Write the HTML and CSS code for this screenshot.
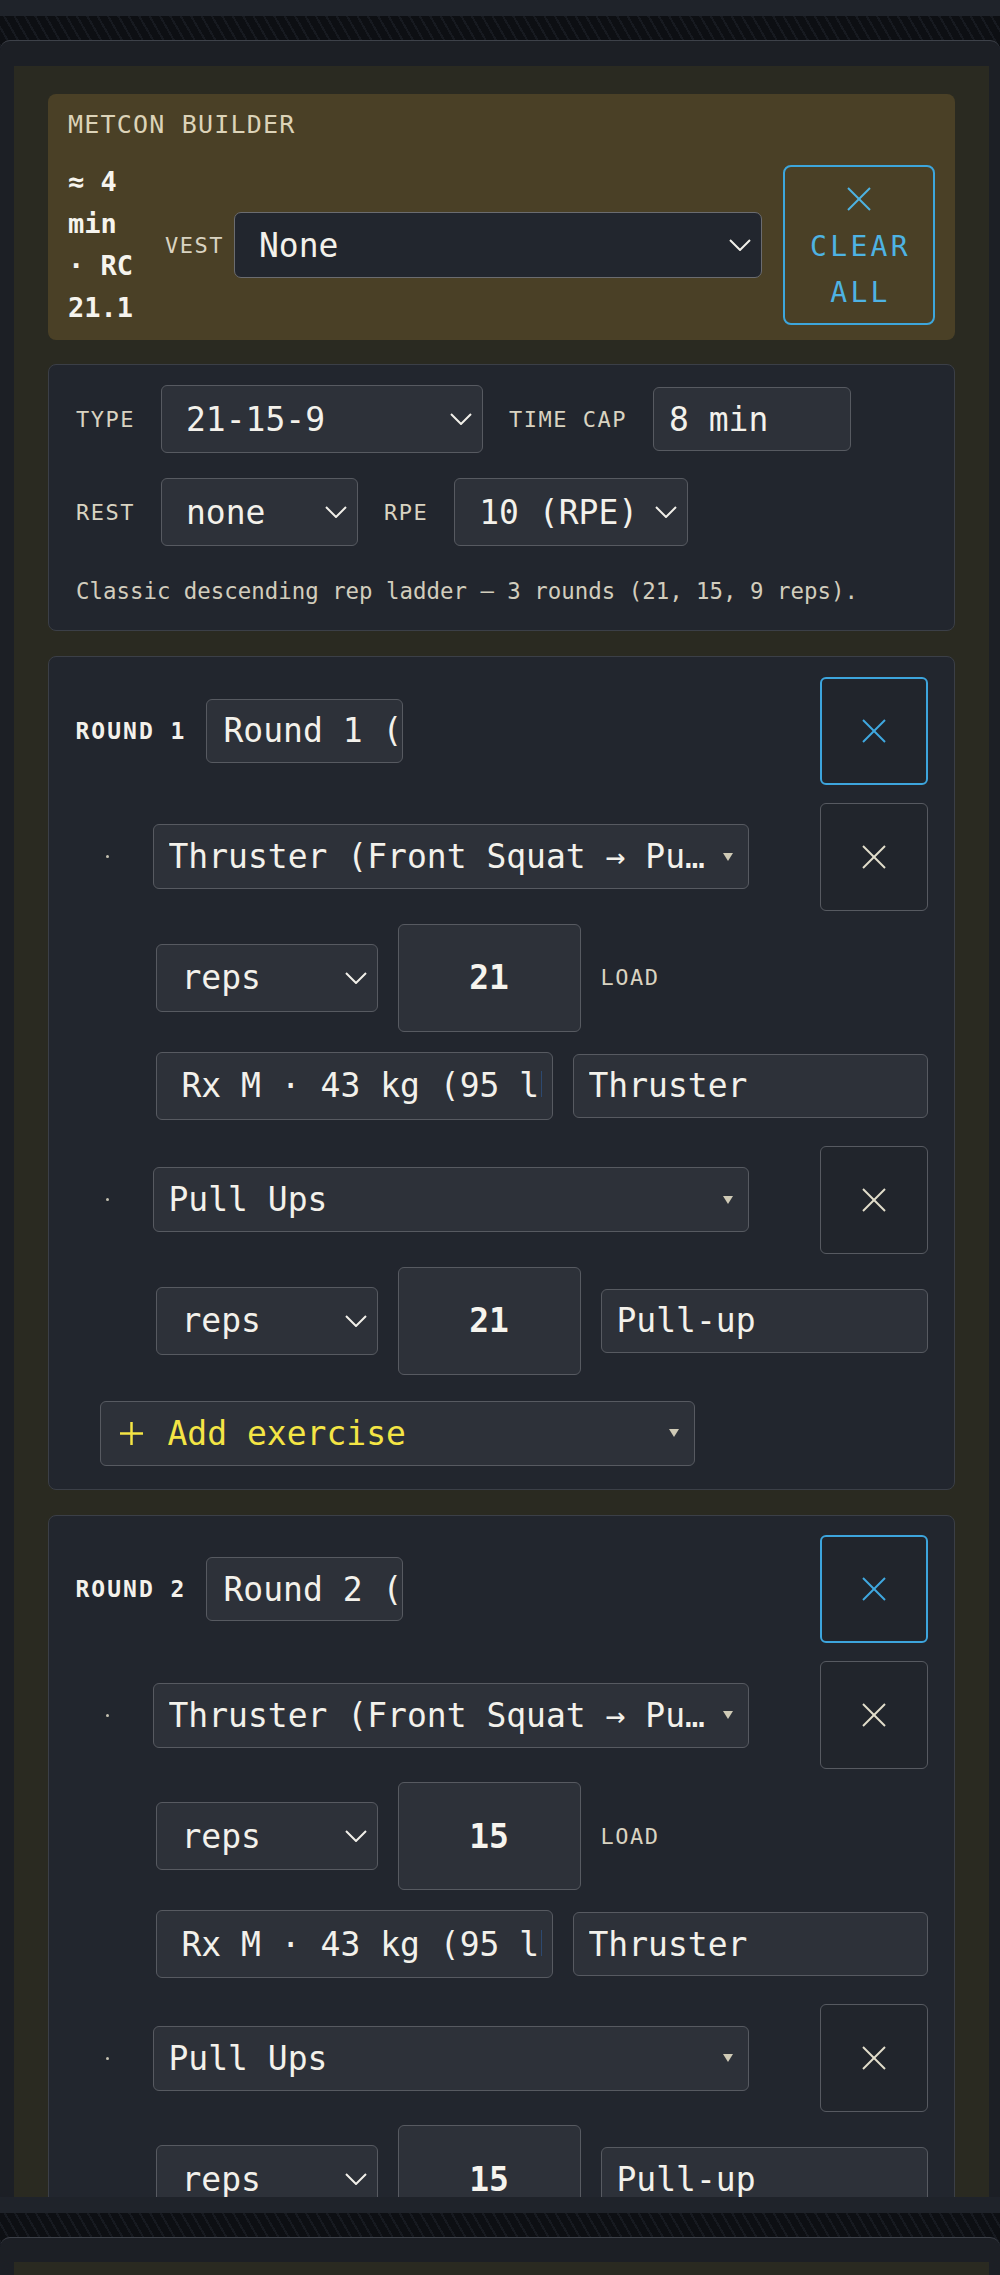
FILE: index.html
```html
<!DOCTYPE html>
<html lang="en">
<head>
<meta charset="utf-8">
<title>Metcon Builder</title>
<link rel="stylesheet" href="styles.css">
</head>
<body>
<div class="prev-end"></div>
<div class="panel">
  <div class="builder">
    <section class="hero">
      <div class="hero-title">METCON BUILDER</div>
      <div class="hero-row">
        <div class="stats">≈ 4 min · RC 21.1</div>
        <span class="label vest-label">VEST</span>
        <div class="ctl vest-select"><span class="txt">None</span><svg class="chev" viewBox="0 0 22 12" width="22" height="12"><polyline points="1,1 11,11 21,1"/></svg></div>
        <button class="clear-btn"><svg class="x-ico" viewBox="0 0 24 24" width="24" height="24"><line x1="1" y1="1" x2="23" y2="23"/><line x1="23" y1="1" x2="1" y2="23"/></svg><span class="clear-txt">CLEAR ALL</span></button>
      </div>
    </section>

    <section class="card config">
      <div class="cfg-row">
        <span class="label">TYPE</span>
        <div class="ctl sel w-type"><span class="txt">21-15-9</span><svg class="chev" viewBox="0 0 22 12" width="22" height="12"><polyline points="1,1 11,11 21,1"/></svg></div>
        <span class="label">TIME CAP</span>
        <div class="ctl inp w-cap"><span class="txt">8 min</span></div>
      </div>
      <div class="cfg-row row2">
        <span class="label">REST</span>
        <div class="ctl sel w-rest"><span class="txt">none</span><svg class="chev" viewBox="0 0 22 12" width="22" height="12"><polyline points="1,1 11,11 21,1"/></svg></div>
        <span class="label">RPE</span>
        <div class="ctl sel w-rpe"><span class="txt">10 (RPE)</span><svg class="chev" viewBox="0 0 22 12" width="22" height="12"><polyline points="1,1 11,11 21,1"/></svg></div>
      </div>
      <p class="desc">Classic descending rep ladder — 3 rounds (21, 15, 9 reps).</p>
    </section>

    <section class="card round">
      <div class="round-head">
        <span class="round-label">ROUND 1</span>
        <div class="ctl inp round-name"><span class="txt">Round 1 (21 reps)</span></div>
        <button class="del-btn del-round"><svg class="x-ico" viewBox="0 0 24 24" width="24" height="24"><line x1="1" y1="1" x2="23" y2="23"/><line x1="23" y1="1" x2="1" y2="23"/></svg></button>
      </div>
      <div class="ex-list">
        <div class="ex">
          <div class="ex-row">
            <span class="dot-col"><span class="dot"></span></span>
            <div class="ctl pick"><span class="txt">Thruster (Front Squat → Pu…</span><svg class="tri" viewBox="0 0 10 8" width="10" height="8"><polygon points="0,0 10,0 5,8"/></svg></div>
            <button class="del-btn"><svg class="x-ico" viewBox="0 0 24 24" width="24" height="24"><line x1="1" y1="1" x2="23" y2="23"/><line x1="23" y1="1" x2="1" y2="23"/></svg></button>
          </div>
          <div class="sub">
            <div class="ctl sel w-unit"><span class="txt">reps</span><svg class="chev" viewBox="0 0 22 12" width="22" height="12"><polyline points="1,1 11,11 21,1"/></svg></div>
            <div class="num">21</div>
            <span class="label">LOAD</span>
            <div class="ctl sel w-rx"><span class="txt">Rx M · 43 kg (95 lb)</span></div>
            <div class="ctl inp name"><span class="txt">Thruster</span></div>
          </div>
        </div>
        <div class="ex">
          <div class="ex-row">
            <span class="dot-col"><span class="dot"></span></span>
            <div class="ctl pick"><span class="txt">Pull Ups</span><svg class="tri" viewBox="0 0 10 8" width="10" height="8"><polygon points="0,0 10,0 5,8"/></svg></div>
            <button class="del-btn"><svg class="x-ico" viewBox="0 0 24 24" width="24" height="24"><line x1="1" y1="1" x2="23" y2="23"/><line x1="23" y1="1" x2="1" y2="23"/></svg></button>
          </div>
          <div class="sub">
            <div class="ctl sel w-unit"><span class="txt">reps</span><svg class="chev" viewBox="0 0 22 12" width="22" height="12"><polyline points="1,1 11,11 21,1"/></svg></div>
            <div class="num">21</div>
            <div class="ctl inp name"><span class="txt">Pull-up</span></div>
          </div>
        </div>
        <div class="ctl add"><svg class="plus" viewBox="0 0 25 25" width="25" height="25"><line x1="12.5" y1="1" x2="12.5" y2="24"/><line x1="1" y1="12.5" x2="24" y2="12.5"/></svg><span class="txt">Add exercise</span><svg class="tri" viewBox="0 0 10 8" width="10" height="8"><polygon points="0,0 10,0 5,8"/></svg></div>
      </div>
    </section>

    <section class="card round">
      <div class="round-head">
        <span class="round-label">ROUND 2</span>
        <div class="ctl inp round-name"><span class="txt">Round 2 (15 reps)</span></div>
        <button class="del-btn del-round"><svg class="x-ico" viewBox="0 0 24 24" width="24" height="24"><line x1="1" y1="1" x2="23" y2="23"/><line x1="23" y1="1" x2="1" y2="23"/></svg></button>
      </div>
      <div class="ex-list">
        <div class="ex">
          <div class="ex-row">
            <span class="dot-col"><span class="dot"></span></span>
            <div class="ctl pick"><span class="txt">Thruster (Front Squat → Pu…</span><svg class="tri" viewBox="0 0 10 8" width="10" height="8"><polygon points="0,0 10,0 5,8"/></svg></div>
            <button class="del-btn"><svg class="x-ico" viewBox="0 0 24 24" width="24" height="24"><line x1="1" y1="1" x2="23" y2="23"/><line x1="23" y1="1" x2="1" y2="23"/></svg></button>
          </div>
          <div class="sub">
            <div class="ctl sel w-unit"><span class="txt">reps</span><svg class="chev" viewBox="0 0 22 12" width="22" height="12"><polyline points="1,1 11,11 21,1"/></svg></div>
            <div class="num">15</div>
            <span class="label">LOAD</span>
            <div class="ctl sel w-rx"><span class="txt">Rx M · 43 kg (95 lb)</span></div>
            <div class="ctl inp name"><span class="txt">Thruster</span></div>
          </div>
        </div>
        <div class="ex">
          <div class="ex-row">
            <span class="dot-col"><span class="dot"></span></span>
            <div class="ctl pick"><span class="txt">Pull Ups</span><svg class="tri" viewBox="0 0 10 8" width="10" height="8"><polygon points="0,0 10,0 5,8"/></svg></div>
            <button class="del-btn"><svg class="x-ico" viewBox="0 0 24 24" width="24" height="24"><line x1="1" y1="1" x2="23" y2="23"/><line x1="23" y1="1" x2="1" y2="23"/></svg></button>
          </div>
          <div class="sub">
            <div class="ctl sel w-unit"><span class="txt">reps</span><svg class="chev" viewBox="0 0 22 12" width="22" height="12"><polyline points="1,1 11,11 21,1"/></svg></div>
            <div class="num">15</div>
            <div class="ctl inp name"><span class="txt">Pull-up</span></div>
          </div>
        </div>
        <div class="ctl add"><svg class="plus" viewBox="0 0 25 25" width="25" height="25"><line x1="12.5" y1="1" x2="12.5" y2="24"/><line x1="1" y1="12.5" x2="24" y2="12.5"/></svg><span class="txt">Add exercise</span><svg class="tri" viewBox="0 0 10 8" width="10" height="8"><polygon points="0,0 10,0 5,8"/></svg></div>
      </div>
    </section>
  </div>
  <div class="panel-foot"></div>
</div>
<div class="panel next">
  <div class="builder short"></div>
</div>
</body>
</html>
```

FILE: styles.css
```css
* { box-sizing: border-box; }
html, body { margin: 0; padding: 0; }
body {
  width: 1000px;
  height: 2275px;
  overflow: hidden;
  background-color: #0e1014;
  background-image: repeating-linear-gradient(60deg, #0d0f13 0 7px, #171a20 7px 9px);
  font-family: "DejaVu Sans Mono", monospace;
  color: #f1efe9;
}

.prev-end { height: 16px; background: #1f232a; margin-bottom: 24px; }

.panel {
  background: #1c1f25;
  border-top: 1px solid #3d4149;
  border-radius: 10px 10px 0 0;
  padding: 25px 11px 0 14px;
}
.panel.next { margin-top: 24px; padding-top: 24px; }

.builder {
  height: 2131px;
  overflow: hidden;
  background: #2a2a21;
  padding: 28px 34px 0;
}
.builder.short { height: 20px; }

.panel-foot { height: 16px; background: #1f232a; margin: 0 -11px 0 -14px; }

/* hero */
.hero {
  background: #4a4026;
  border-radius: 8px;
  padding: 16px 20px 11px;
  margin-bottom: 24px;
}
.hero-title { font-size: 25px; letter-spacing: 1.2px; line-height: 30px; color: #dcd3b8; }
.hero-row { margin-top: 21px; display: flex; align-items: center; }
.stats {
  width: 66px;
  flex: none;
  font-weight: bold;
  font-size: 27px;
  line-height: 42px;
  margin-right: 31px;
  color: #f6f4ee;
}
.label { font-size: 22px; letter-spacing: 1.5px; color: #d9d3c1; white-space: nowrap; flex: none; }
.vest-label { margin-right: 10px; }

.ctl {
  display: flex;
  align-items: center;
  font-size: 33px;
  color: #f3f1eb;
  white-space: nowrap;
  border-radius: 6px;
  background: #2d3139;
  border: 1.5px solid #575a61;
  flex: none;
}
.ctl .txt { flex: 1; overflow: hidden; white-space: nowrap; }
.chev { fill: none; stroke: #f1efe9; stroke-width: 2; flex: none; }
.tri { fill: #cfcab6; flex: none; }

.vest-select {
  flex: 1;
  height: 66px;
  background: #22262e;
  border-color: #6b6c70;
  border-radius: 7px;
  padding: 0 10px 0 24px;
}

button { font: inherit; color: inherit; background: none; padding: 0; margin: 0; cursor: pointer; }

.clear-btn {
  flex: none;
  margin-left: 21px;
  width: 152px;
  height: 160px;
  border: 2px solid #3da6dc;
  border-radius: 8px;
  display: flex;
  flex-direction: column;
  align-items: center;
  padding-top: 20px;
  color: #4eb3e3;
}
.x-ico { stroke: currentColor; stroke-width: 2; fill: none; flex: none; }
.clear-txt {
  margin-top: 13px;
  font-size: 28px;
  letter-spacing: 3.3px;
  line-height: 46px;
  text-align: center;
  padding-left: 3px;
}

/* cards */
.card {
  background: #22262e;
  border: 1.5px solid #3b3f47;
  border-radius: 8px;
}
.config { padding: 20px 27px 24px; margin-bottom: 25px; }
.cfg-row { display: flex; align-items: center; gap: 26px; }
.cfg-row.row2 { margin-top: 25px; }
.sel { height: 68px; padding: 0 10px 0 24px; }
.inp { height: 64px; padding: 0 0 0 15px; }
.w-type { width: 322px; }
.w-cap { width: 198px; }
.w-rest { width: 197px; }
.w-rpe { width: 234px; }
.desc {
  margin: 30px 0 0;
  font-size: 22.4px;
  line-height: 30px;
  color: #d2cdbd;
}

/* rounds */
.round { padding: 19.5px 26.5px 23px; margin-bottom: 25px; }
.round-head { display: flex; align-items: center; }
.round-label {
  font-weight: bold;
  font-size: 23px;
  letter-spacing: 2px;
  color: #f3f1eb;
  margin-right: 20px;
  white-space: nowrap;
}
.round-name { width: 197px; padding-left: 16px; }
.del-btn {
  flex: none;
  width: 108px;
  height: 108px;
  margin-left: auto;
  border: 1.5px solid #575a61;
  border-radius: 6px;
  background: #21252c;
  display: flex;
  align-items: center;
  justify-content: center;
  color: #e2decb;
}
.del-btn.del-round { border: 2px solid #3da5dd; color: #3fa9e0; }

.ex-list { margin-left: 24px; }
.ex + .ex { margin-top: 26px; }
.ex-row { margin-top: 18px; display: flex; align-items: center; }
.ex + .ex .ex-row { margin-top: 0; }
.dot-col { width: 53px; flex: none; display: flex; align-items: center; padding-left: 6px; }
.dot { width: 3px; height: 3px; border-radius: 50%; background: #c4c0b0; }
.pick { width: 596px; height: 65px; padding: 0 15px 0 15px; }
.pick .txt { flex: 1; }

.sub {
  margin-top: 13px;
  padding-left: 56px;
  display: flex;
  flex-wrap: wrap;
  align-items: center;
  gap: 20px;
}
.w-unit { width: 222px; padding-left: 25px; }
.w-rx { width: 397px; padding-left: 25px; padding-right: 10px; }
.num {
  flex: none;
  width: 183px;
  height: 108px;
  background: #2d3139;
  border: 1.5px solid #575a61;
  border-radius: 6px;
  display: flex;
  align-items: center;
  justify-content: center;
  font-size: 33px;
  font-weight: bold;
  color: #f6f4ee;
}
.name { flex: 1 1 300px; }

.add {
  margin-top: 26px;
  width: 595px;
  height: 65px;
  padding: 0 15px 0 18px;
  color: #f4e545;
}
.plus { stroke: #f4e545; stroke-width: 2.5; flex: none; margin-right: 24px; }
```
